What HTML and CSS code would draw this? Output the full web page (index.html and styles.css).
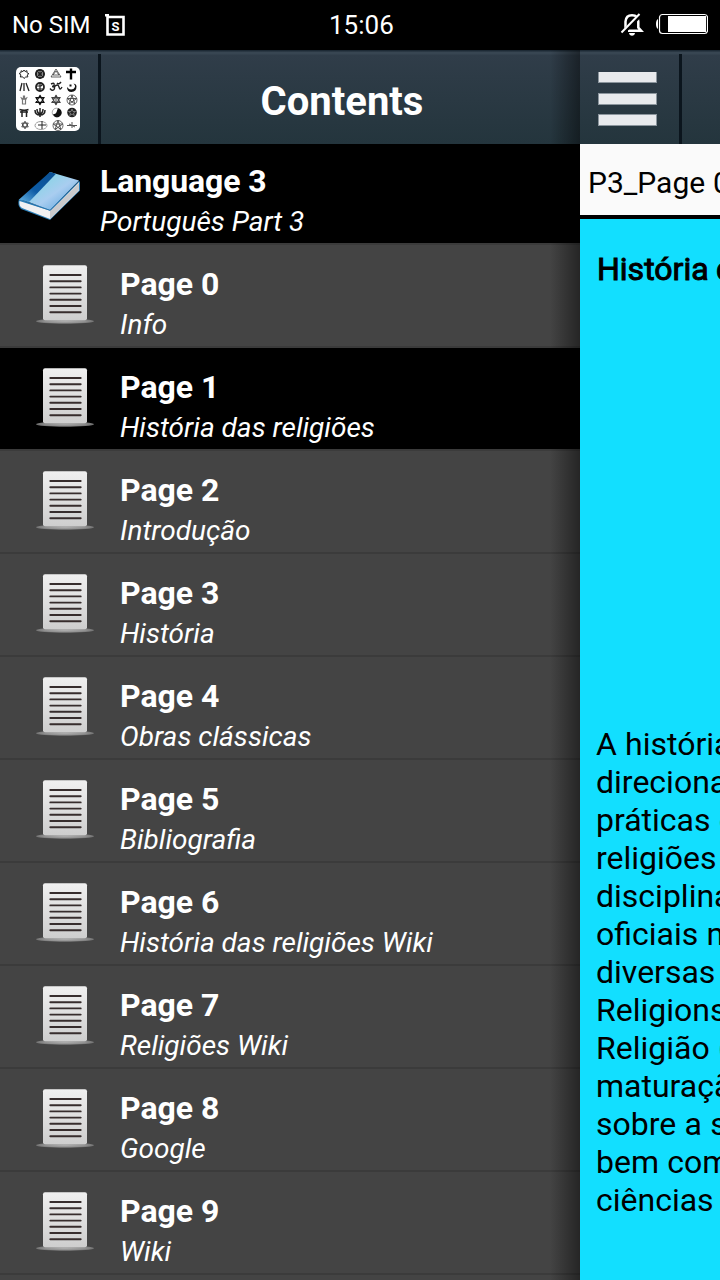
FILE: index.html
```html
<!DOCTYPE html>
<html lang="pt">
<head>
<meta charset="utf-8">
<title>Contents</title>
<link rel="stylesheet" href="styles.css">
</head>
<body>
<svg class="defs" aria-hidden="true">
  <defs>
    <linearGradient id="paper" x1="0" y1="0" x2="0" y2="1"><stop offset="0" stop-color="#f0f0f0"/><stop offset="1" stop-color="#cecece"/></linearGradient>
    <radialGradient id="shade"><stop offset="0" stop-color="#bbb"/><stop offset=".7" stop-color="#999"/><stop offset="1" stop-color="#777"/></radialGradient>
    <linearGradient id="cover" x1="0" y1="0" x2="1" y2="1"><stop offset="0" stop-color="#4fb0e0"/><stop offset=".3" stop-color="#8fd3e8"/><stop offset=".55" stop-color="#a9cdf0"/><stop offset="1" stop-color="#4a9cd8"/></linearGradient>
    <linearGradient id="spine" x1="1" y1="0" x2="0" y2="1"><stop offset="0" stop-color="#0a4f91"/><stop offset=".6" stop-color="#0e5ca5"/><stop offset="1" stop-color="#65b3e4"/></linearGradient>
  </defs>
  <symbol id="page" viewBox="0 0 60 62">
    <ellipse cx="29" cy="57.200" rx="29" ry="2.600" fill="url(#shade)" opacity=".9"/>
    <rect x="7" y="1.200" width="44" height="55" rx="2" fill="url(#paper)"/>
    <path d="M14.300 11h30.400M14.300 17.200h30.400M14.300 23.400h30.400M14.300 29.600h30.400M14.300 35.800h30.400M14.300 42h30.400M14.300 48.200h30.400" stroke="#372d2d" stroke-width="1.9" stroke-linecap="round"/>
  </symbol>
  <symbol id="star6" viewBox="-6 -6 12 12"><path d="M0-5 4.3 2.5h-8.6zM0 5-4.3-2.5h8.6z" fill="none" stroke="currentColor" stroke-width="1.3"/></symbol>
  <symbol id="penta" viewBox="-6 -6 12 12"><circle r="5" fill="none" stroke="currentColor" stroke-width=".8"/><path d="M0-5 2.9 4-4.7-1.5h9.4L-2.9 4z" fill="none" stroke="currentColor" stroke-width=".9"/></symbol>
</svg>
<div class="screen">
  <div class="status">
    <span class="carrier">No SIM</span>
    <svg class="sim" viewBox="0 0 22 24"><path d="M1 2.200h4M3.500 1v20.500h16V4H3" fill="none" stroke="#fff" stroke-width="2.600"/><text x="11.500" y="17.500" text-anchor="middle" class="sim-letter">S</text></svg>
    <span class="time">15:06</span>
    <svg class="bell" viewBox="0 0 24 24"><g fill="none" stroke="#fff" stroke-width="2.500"><path d="M5.500 17V9.500Q6 3.200 12 3.200Q18.300 3.200 18.300 9.500V15.500l3 3.300H8"/><path d="M2 21.500 20.500 3" stroke="#000" stroke-width="4"/><path d="M1.500 20.500 19.500 2" stroke-width="2"/></g><path d="M9 21h6q-.5 2.800-3 2.800T9 21" fill="#fff"/></svg>
    <svg class="battery" viewBox="0 0 52 22"><path d="M2 6Q0 7 0 11t2 5z" fill="#fff"/><rect x="3.500" y="1.500" width="48" height="19" rx="3" fill="none" stroke="#fff" stroke-width="1.2"/><rect x="12" y="3" width="38" height="16" fill="#fff"/></svg>
  </div>
  <div class="body">
    <aside class="drawer">
      <header class="bar">
        <div class="logo-cell">
          <svg class="logo" viewBox="0 0 64 64">
            <rect width="64" height="64" rx="5" fill="#fff"/>
            <g fill="none" stroke="#222">
              <path d="m8 3 1 1.500 2-.8-.1 2 2 1-1.700 1.300.7 1.900-2.200.1L8 11.500l-1.400-1.700-2.300.2.600-2.100-1.800-1.400 2-.9L5 3.800l2 .8z" stroke-width="1"/>
              <circle cx="24" cy="7" r="4" stroke-width="2"/><path d="M24 2v10M19 7h10M20.500 3.500l7 7M27.500 3.500l-7 7" stroke-width="1.200"/>
              <path d="m40 2-5 8h10zM37 8h6l-3-4z" stroke-width=".7"/>
              <path d="M55 1.500v11M50 5h10" stroke="#000" stroke-width="2.400"/>
              <path d="m4 24 2-8M8 16v8M10 16l3 8" stroke-width="1.300"/>
              <circle cx="24" cy="20" r="4" stroke-width="1.800"/><path d="M20 19h5l2-2M21 22h6M24 17v6" stroke-width="1.200"/>
              <path d="M35 17q4-2 3 1.500-1 1-2 1 4 0 2 3-2 2-4-1M38 20q4-4 5 0t3 0M41 16q2 2 4-1" stroke-width="1.400"/>
              <path d="M6.500 37v-4l-1-2 2 1v-3h1v3l2-1-1 2v4z" stroke="#777" stroke-width="1.200"/>
              <path d="M3.500 42.500q5 1.500 9 0M4 45h8M6 43v7M10.500 43v7" stroke-width="1.500"/>
              <path d="M24 41v9M19 43q0 5 5 5t5-5M21 42q0 4 3 5 3-1 3-5" stroke-width="1.500"/>
              <ellipse cx="25" cy="58.500" rx="6" ry="4" stroke="#888" stroke-width=".8"/><path d="M26 54v8M22 58h8" stroke-width="1"/>
              <path d="M51 58.500h10M56 55v6M53 57l6 3" stroke="#555" stroke-width="1"/>
            </g>
            <path d="M51 20q0 5 4.500 5 5-.5 5-5.500 0-2.500-3-3 2 1.500 1.500 3.500-1 2.500-4 2.500-2 0-4-2.500M53.500 17.500h2v2h-2z" fill="#111"/>
            <circle cx="40.500" cy="45.500" r="4.300" fill="#fff" stroke="#555" stroke-width=".5"/><path d="M42 41.300a4.500 4.500 0 1 1-5 6q3 0 3.500-2t1.500-4" fill="#111"/>
            <circle cx="56" cy="45.500" r="4.800" fill="#222"/><path d="m56 42 1 2.500h2.500l-2 1.500.8 2.500-2.300-1.500-2.300 1.500.8-2.500-2-1.500H55z" fill="none" stroke="#999" stroke-width=".7"/>
            <g color="#111"><use href="#star6" x="18.500" y="27.500" width="11" height="11"/></g>
            <g color="#444"><use href="#star6" x="34.500" y="27.500" width="11" height="11"/><path d="M40 28.500v9" stroke="#444"/><use href="#penta" x="50" y="27" width="12" height="12"/><use href="#star6" x="4.500" y="53.500" width="9" height="9"/><use href="#penta" x="36" y="52.500" width="12" height="12"/></g>
          </svg>
        </div>
        <h1 class="bar-title">Contents</h1>
      </header>
      <ul class="list">
        <li class="row book active"><svg class="book-icon" viewBox="0 0 66 52">
          <path d="M2 28Q0 34 4 38L33 49 63 19.500V10L33 38z" fill="#2b7fb8"/>
          <path d="M2.500 30Q1.500 35 5 37L33 48 62 19.500V11L34 40z" fill="#f1f1f2"/><path d="M33 40V48L62 19.500V12z" fill="#c9cacd"/>
          <path d="M33 1 62 9.500 33 39 9 30z" fill="url(#cover)"/><path d="M33 1 39 2.700 12 31 2 28.500z" fill="url(#spine)"/><path d="M9 31 33 39.300 62 10" fill="none" stroke="#2470a8" stroke-width=".8"/>
        </svg><div><h2>Language 3</h2><p>Português Part 3</p></div></li>
        <li class="row"><svg class="page-icon"><use href="#page"/></svg><div><h2>Page 0</h2><p>Info</p></div></li>
        <li class="row active"><svg class="page-icon"><use href="#page"/></svg><div><h2>Page 1</h2><p>História das religiões</p></div></li>
        <li class="row"><svg class="page-icon"><use href="#page"/></svg><div><h2>Page 2</h2><p>Introdução</p></div></li>
        <li class="row"><svg class="page-icon"><use href="#page"/></svg><div><h2>Page 3</h2><p>História</p></div></li>
        <li class="row"><svg class="page-icon"><use href="#page"/></svg><div><h2>Page 4</h2><p>Obras clássicas</p></div></li>
        <li class="row"><svg class="page-icon"><use href="#page"/></svg><div><h2>Page 5</h2><p>Bibliografia</p></div></li>
        <li class="row"><svg class="page-icon"><use href="#page"/></svg><div><h2>Page 6</h2><p>História das religiões Wiki</p></div></li>
        <li class="row"><svg class="page-icon"><use href="#page"/></svg><div><h2>Page 7</h2><p>Religiões Wiki</p></div></li>
        <li class="row"><svg class="page-icon"><use href="#page"/></svg><div><h2>Page 8</h2><p>Google</p></div></li>
        <li class="row"><svg class="page-icon"><use href="#page"/></svg><div><h2>Page 9</h2><p>Wiki</p></div></li>
      </ul>
    </aside>
    <main class="content">
      <header class="bar">
        <div class="menu"><i></i><i></i><i></i></div>
      </header>
      <div class="crumb">P3_Page 0</div>
      <article class="article">
        <h3>História d</h3>
        <p>A história<br>direciona<br>práticas e<br>religiões<br>disciplina<br>oficiais n<br>diversas<br>Religions<br>Religião (<br>maturaçã<br>sobre a s<br>bem com<br>ciências</p>
      </article>
    </main>
  </div>
</div>
</body>
</html>
```
FILE: styles.css
```css
* { box-sizing: border-box; margin: 0; padding: 0; }
body { background: #000; font-family: Roboto, sans-serif; overflow: hidden; }
.defs { position: absolute; width: 0; height: 0; }
.screen { width: 720px; height: 1280px; display: flex; flex-direction: column; overflow: hidden; }
.status { height: 50px; flex: none; display: grid; grid-template-columns: 92px 225px 291px 36px 52px; align-items: center; padding-left: 12px; background: #000; color: #fff; }
.carrier { font-size: 24px; }
.sim { width: 22px; height: 24px; margin-top: -1px; }
.sim-letter { font: bold 13px Roboto, sans-serif; fill: #fff; }
.time { font-size: 26px; }
.bell { width: 24px; height: 24px; margin-top: -2px; }
.battery { width: 52px; height: 22px; margin-top: -2px; }
.body { flex: 1; display: flex; min-height: 0; }
.drawer { position: relative; width: 580px; flex: none; background: #444; overflow: hidden; }
.drawer::after { content: ""; position: absolute; inset: 0 0 0 auto; width: 30px; background: linear-gradient(90deg, transparent, rgba(0, 0, 0, .45)); }
.bar { height: 94px; display: flex; color: #fff; background: linear-gradient(#1d2a35 0 1px, #384652 2px 4px, #303d49 5px, #24353d); }
.logo-cell { width: 101px; border-right: 3px solid #0b151d; margin-top: 4px; padding: 13px 0 0 16px; }
.logo { display: block; width: 64px; height: 64px; }
.bar-title { flex: 1; text-align: center; font-size: 40px; line-height: 47px; padding: 28px 0 0 3px; }
.list { list-style: none; }
.row { height: 103px; display: flex; padding: 20px 0 0 36px; background: #444; border-bottom: 2px solid #3b3b3b; color: #fff; }
.row.book { height: 101px; padding: 18px 0 0 17px; }
.row.active { background: #000; }
.row h2 { font-size: 32px; line-height: 38px; }
.row.book h2 { letter-spacing: -.1px; }
.row p { font-size: 28px; line-height: 33px; margin-top: 5px; font-style: italic; }
.page-icon { width: 60px; height: 62px; margin: -1px 24px 0 0; }
.book-icon { width: 66px; height: 52px; margin: 9px 17px 0 0; }
.content { width: 140px; overflow: hidden; background: #12dfff; display: flex; flex-direction: column; white-space: nowrap; }
.content .bar { flex: none; }
.menu { width: 102px; border-right: 3px solid #0b151d; margin-top: 4px; padding: 18px 0 0 18px; display: flex; flex-direction: column; gap: 10px; }
.menu i { width: 59px; height: 11px; background: #e8eaed; border: solid #8b959d; border-width: 0 1px 1px; }
.menu i + i { height: 12px; border-top-width: 1px; }
.menu i:last-child { height: 12px; margin-top: -1px; }
.crumb { flex: none; height: 75px; padding: 20px 8px; background: #fafafa; border-bottom: 4px solid #000; font-size: 30px; line-height: 38px; word-spacing: .5px; color: #000; }
.article { padding: 31px 16px; color: #000; font-size: 32px; line-height: 38px; word-spacing: .3px; }
.article h3 { font-size: 32px; font-weight: 400; -webkit-text-stroke: 1px #000; height: 475px; padding-left: 1px; word-spacing: -.5px; }
```
